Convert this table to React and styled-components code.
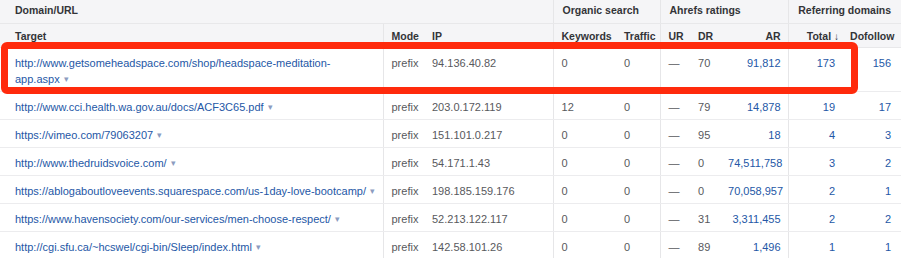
import React from "react";
import styled, { createGlobalStyle } from "styled-components";

const rows = [
  {
    url: "http://www.getsomeheadspace.com/shop/headspace-meditation-app.aspx",
    ip: "94.136.40.82",
    keywords: "0",
    traffic: "0",
    dr: "70",
    ar: "91,812",
    total: "173",
    dofollow: "156",
  },
  {
    url: "http://www.cci.health.wa.gov.au/docs/ACF3C65.pdf",
    ip: "203.0.172.119",
    keywords: "12",
    traffic: "0",
    dr: "79",
    ar: "14,878",
    total: "19",
    dofollow: "17",
  },
  {
    url: "https://vimeo.com/79063207",
    ip: "151.101.0.217",
    keywords: "0",
    traffic: "0",
    dr: "95",
    ar: "18",
    total: "4",
    dofollow: "3",
  },
  {
    url: "http://www.thedruidsvoice.com/",
    ip: "54.171.1.43",
    keywords: "0",
    traffic: "0",
    dr: "0",
    ar: "74,511,758",
    total: "3",
    dofollow: "2",
  },
  {
    url: "https://ablogaboutloveevents.squarespace.com/us-1day-love-bootcamp/",
    ip: "198.185.159.176",
    keywords: "0",
    traffic: "0",
    dr: "0",
    ar: "70,058,957",
    total: "2",
    dofollow: "1",
  },
  {
    url: "https://www.havensociety.com/our-services/men-choose-respect/",
    ip: "52.213.122.117",
    keywords: "0",
    traffic: "0",
    dr: "31",
    ar: "3,311,455",
    total: "2",
    dofollow: "2",
  },
  {
    url: "http://cgi.sfu.ca/~hcswel/cgi-bin/Sleep/index.html",
    ip: "142.58.101.26",
    keywords: "0",
    traffic: "0",
    dr: "89",
    ar: "1,496",
    total: "1",
    dofollow: "1",
  },
];

const widths = [383, 41, 129, 63, 44, 30, 30, 68, 54, 59];

function App() {
  return (
    <>
      <GlobalStyle />
      <Wrapper>
        <Table>
          <colgroup>
            {widths.map((w, i) => (
              <col key={i} style={{ width: w }} />
            ))}
          </colgroup>
          <thead>
            <GroupRow>
              <GroupHead colSpan={3} first>Domain/URL</GroupHead>
              <GroupHead colSpan={2} divider>Organic search</GroupHead>
              <GroupHead colSpan={3} divider>Ahrefs ratings</GroupHead>
              <GroupHead colSpan={2} divider right>Referring domains</GroupHead>
            </GroupRow>
            <HeadRow>
              <Head first>Target</Head>
              <Head divider>Mode</Head>
              <Head>IP</Head>
              <Head divider>Keywords</Head>
              <Head>Traffic</Head>
              <Head divider>UR</Head>
              <Head>DR</Head>
              <Head right>AR</Head>
              <Head divider right tight>
                Total<SortArrow>↓</SortArrow>
              </Head>
              <Head right last>Dofollow</Head>
            </HeadRow>
          </thead>
          <tbody>
            {rows.map((r) => (
              <Row key={r.url}>
                <Cell first>
                  <UrlLink>{r.url}</UrlLink>
                  <Caret>▾</Caret>
                </Cell>
                <Cell divider>prefix</Cell>
                <Cell>{r.ip}</Cell>
                <Cell divider>{r.keywords}</Cell>
                <Cell>{r.traffic}</Cell>
                <Cell divider>—</Cell>
                <Cell>{r.dr}</Cell>
                <Cell right link>{r.ar}</Cell>
                <Cell divider right link>{r.total}</Cell>
                <Cell right link last>{r.dofollow}</Cell>
              </Row>
            ))}
          </tbody>
        </Table>
        <Highlight />
      </Wrapper>
    </>
  );
}

const GlobalStyle = createGlobalStyle`
  body {
    margin: 0;
    background: #ffffff;
    font-family: "Liberation Sans", Arial, sans-serif;
  }
`;

const Wrapper = styled.div`
  position: relative;
  width: 901px;
  height: 258px;
  overflow: hidden;
  background: #ffffff;
`;

const Table = styled.table`
  width: 901px;
  table-layout: fixed;
  border-collapse: collapse;
  font-size: 11px;
  line-height: 16px;
`;

const GroupRow = styled.tr`
  background: #f5f5f7;
`;

const HeadRow = styled.tr`
  background: #f5f5f7;
`;

const GroupHead = styled.th`
  height: 23px;
  box-sizing: border-box;
  padding: 0 ${(p) => (p.right ? "10px" : "8px")} 3px ${(p) => (p.first ? "15px" : "9px")};
  text-align: ${(p) => (p.right ? "right" : "left")};
  font-size: 10.5px;
  font-weight: 700;
  color: #333438;
  border-bottom: 1px solid #e8e8ea;
  border-left: ${(p) => (p.divider ? "1px solid #e6e6e8" : "none")};
  white-space: nowrap;
  vertical-align: middle;
`;

const Head = styled.th`
  height: 24px;
  box-sizing: border-box;
  padding: 2px ${(p) => (p.last ? "10px" : p.tight ? "3px" : "7px")} 0
    ${(p) => (p.first ? "15px" : "8px")};
  text-align: ${(p) => (p.right ? "right" : "left")};
  font-size: 10.5px;
  font-weight: 700;
  color: #333438;
  border-bottom: 1px solid #e8e8ea;
  border-left: ${(p) => (p.divider ? "1px solid #e6e6e8" : "none")};
  white-space: nowrap;
  vertical-align: middle;
`;

const SortArrow = styled.span`
  margin-left: 3px;
  font-weight: 400;
  font-size: 10px;
`;

const Row = styled.tr`
  background: #ffffff;
`;

const Cell = styled.td`
  padding: 7px ${(p) => (p.last ? "10px" : "7px")} 4px ${(p) => (p.first ? "15px" : "8px")};
  text-align: ${(p) => (p.right ? "right" : "left")};
  vertical-align: top;
  color: ${(p) => (p.link ? "#2457a6" : "#58595d")};
  border-bottom: 1px solid #ececee;
  border-left: ${(p) => (p.divider ? "1px solid #e6e6e8" : "none")};
  white-space: ${(p) => (p.first ? "normal" : "nowrap")};
`;

const UrlLink = styled.span`
  color: #2457a6;
`;

const Caret = styled.span`
  margin-left: 4px;
  font-size: 9px;
  line-height: 10px;
  vertical-align: 1px;
  color: #8c9cc0;
`;

const Highlight = styled.div`
  position: absolute;
  left: 1px;
  top: 42px;
  width: 857px;
  height: 52px;
  box-sizing: border-box;
  border: 7px solid #ff2a0c;
  border-radius: 6px;
  pointer-events: none;
`;

export default App;
